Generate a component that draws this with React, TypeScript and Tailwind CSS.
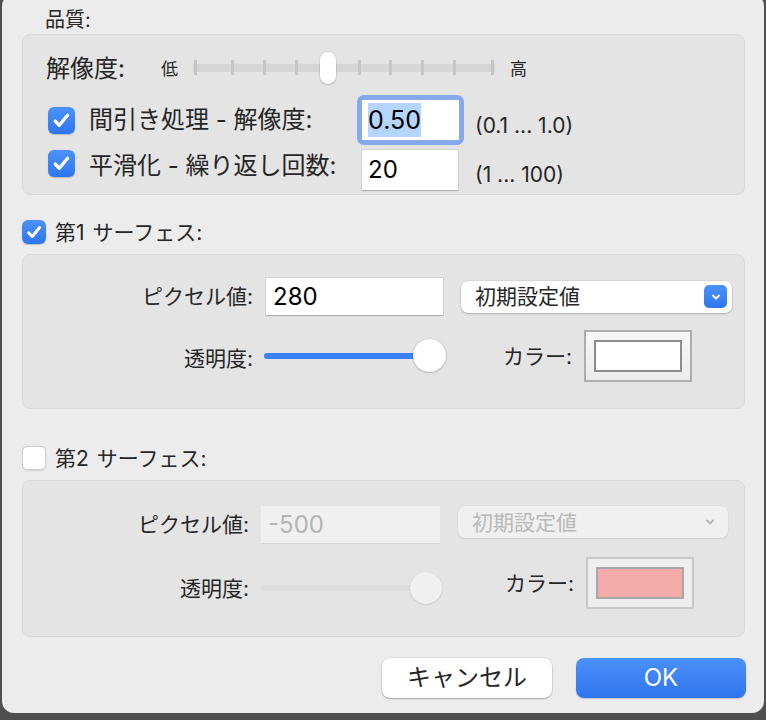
import React from "react"

function Checkbox({ checked, big }: { checked: boolean; big?: boolean }) {
  const size = big ? "w-[27px] h-[27px]" : "w-[24px] h-[24px]"
  if (!checked) {
    return (
      <div
        className={`${size} shrink-0 rounded-[5px] border border-[#cfcfcf] bg-white shadow-[0_0.5px_1px_rgba(0,0,0,0.12)]`}
      />
    )
  }
  return (
    <div
      className={`${size} shrink-0 rounded-[6px] bg-gradient-to-b from-[#4b92fa] to-[#2f75ef] flex items-center justify-center shadow-[0_0.5px_1px_rgba(0,0,0,0.2)]`}
    >
      <svg viewBox="0 0 24 24" className="w-[84%] h-[84%]">
        <path
          d="M5.5 12.8l4.3 4.4L18.6 6.6"
          fill="none"
          stroke="white"
          strokeWidth="3.6"
          strokeLinecap="round"
          strokeLinejoin="round"
        />
      </svg>
    </div>
  )
}

// tick centres, relative to track start
const ticks = [2, 39.7, 71.3, 103, 134.5, 166, 197.7, 229.3, 261, 299.7]

function QualitySlider() {
  return (
    <div className="relative w-[302px] h-[34px]">
      <div className="absolute left-0 right-0 top-[12px] h-[8px] bg-[#d6d6d6]" />
      {ticks.map((t, i) => (
        <div
          key={i}
          className="absolute top-[8px] w-[3px] h-[15px] bg-[#c5c5c5]"
          style={{ left: t - 1.5 }}
        />
      ))}
      <div className="absolute left-[127px] top-0 w-[16px] h-[32px] rounded-full bg-white shadow-[0_0.5px_2px_rgba(0,0,0,0.35)]" />
    </div>
  )
}

function ColorWell({ disabled }: { disabled?: boolean }) {
  return (
    <div
      className={
        disabled
          ? "w-[108px] h-[52px] shrink-0 border-2 border-[#c9c9c9] bg-[#eeeeee] p-[8px]"
          : "w-[108px] h-[52px] shrink-0 border-2 border-[#adadad] bg-gradient-to-b from-[#f7f7f7] to-[#ebebeb] p-[8px]"
      }
    >
      <div
        className={
          disabled
            ? "w-full h-full border-2 border-[#a8a8a8] bg-[#f4acab]"
            : "w-full h-full border-2 border-[#8c8c8c] bg-white"
        }
      />
    </div>
  )
}

export default function App() {
  return (
    <div className="w-[766px] h-[720px] overflow-hidden bg-[#4f4f4f] text-[#262626] font-['Inter','Noto_Sans_CJK_JP',sans-serif]">
      <div className="ml-[2px] -mt-[6px] flex h-[719px] w-[762px] flex-col rounded-[12px] bg-[#ececec] pt-[12px]">
        {/* 品質 */}
        <div className="ml-[43px] h-[28px] text-[20px] leading-[28px]">品質:</div>
        <div className="ml-[20px] mr-[19px] h-[161px] shrink-0 rounded-[8px] border border-[#d9d9d9] bg-[#e4e4e4]">
          <div className="mt-[17px] flex h-[34px] items-center">
            <div className="ml-[23px] w-[115px] text-[24px] leading-none">解像度:</div>
            <div className="w-[32px] text-[17px] leading-none">低</div>
            <QualitySlider />
            <div className="ml-[15px] text-[17px] leading-none">高</div>
          </div>

          <div className="mt-[9px] flex h-[50px] items-center">
            <div className="ml-[25px]">
              <Checkbox checked big />
            </div>
            <div className="ml-[14px] w-[268px] text-[24px] leading-none whitespace-nowrap">間引き処理 - 解像度:</div>
            <div className="w-[107px] h-[50px] rounded-[7px] bg-[#86a9ec] p-[5px]">
              <div className="h-full w-full bg-white pl-[6px] pt-[3px]">
                <span className="inline-block h-[34px] bg-[#b4d5fe] text-[25px] leading-[34px] text-black">0.50</span>
              </div>
            </div>
            <div className="ml-[11px] mt-[10px] text-[21px] leading-none">(0.1 ... 1.0)</div>
          </div>

          <div className="mt-[5px] flex h-[40px] items-start">
            <div className="ml-[25px]">
              <Checkbox checked big />
            </div>
            <div className="ml-[14px] w-[273px] text-[24px] leading-[32px] whitespace-nowrap">平滑化 - 繰り返し回数:</div>
            <div className="w-[96px] h-[40px] bg-white pl-[6px] text-[24px] leading-[40px] text-black shadow-[0_0_0_1px_rgba(0,0,0,0.06),0_1px_1px_rgba(0,0,0,0.18)]">
              20
            </div>
            <div className="ml-[17px] mt-[5px] text-[21px] leading-[40px]">(1 ... 100)</div>
          </div>
        </div>

        {/* 第1 サーフェス */}
        <div className="ml-[20px] mt-[25px] flex h-[24px] items-center">
          <Checkbox checked />
          <div className="ml-[9px] text-[21px] leading-none">
            第1<span className="ml-[8px]">サーフェス:</span>
          </div>
        </div>
        <div className="ml-[20px] mr-[19px] mt-[10px] h-[155px] shrink-0 rounded-[8px] border border-[#d9d9d9] bg-[#e4e4e4]">
          <div className="mt-[23px] flex h-[37px] items-center">
            <div className="w-[230px] text-right text-[21px] leading-none">ピクセル値:</div>
            <div className="ml-[13px] w-[177px] h-[37px] bg-white pl-[7px] text-[24px] leading-[37px] text-black shadow-[0_0_0_1px_rgba(0,0,0,0.06),0_1px_1px_rgba(0,0,0,0.18)]">
              280
            </div>
            <div className="ml-[18px] flex w-[271px] h-[32px] items-center justify-between rounded-[7px] bg-white pl-[14px] pr-[5px] shadow-[0_0_0_0.5px_rgba(0,0,0,0.1),0_1px_2px_rgba(0,0,0,0.2)]">
              <span className="text-[21px] leading-none">初期設定値</span>
              <div className="flex w-[23px] h-[23px] items-center justify-center rounded-[5px] bg-gradient-to-b from-[#4b92fa] to-[#2f75ef]">
                <svg viewBox="0 0 12 12" className="w-[12px] h-[12px]">
                  <path d="M3 4.6l3 3 3-3" fill="none" stroke="white" strokeWidth="2" strokeLinecap="round" strokeLinejoin="round" />
                </svg>
              </div>
            </div>
          </div>

          <div className="mt-[15px] flex h-[52px] items-center">
            <div className="w-[230px] mt-[4px] text-right text-[21px] leading-none">透明度:</div>
            <div className="relative ml-[11px] w-[182px] h-[34px]">
              <div className="absolute left-0 right-[16px] top-[14px] h-[6px] rounded-full bg-[#3a81f5]" />
              <div className="absolute right-0 top-0 w-[33px] h-[33px] rounded-full bg-white shadow-[0_0.5px_2px_rgba(0,0,0,0.35)]" />
            </div>
            <div className="ml-[57px] w-[81px] text-[21px] leading-none">カラー:</div>
            <ColorWell />
          </div>
        </div>

        {/* 第2 サーフェス */}
        <div className="ml-[20px] mt-[37px] flex h-[24px] items-center">
          <Checkbox checked={false} />
          <div className="ml-[9px] text-[21px] leading-none">
            第2<span className="ml-[8px]">サーフェス:</span>
          </div>
        </div>
        <div className="ml-[20px] mr-[19px] mt-[10px] h-[157px] shrink-0 rounded-[8px] border border-[#d9d9d9] bg-[#e4e4e4]">
          <div className="mt-[25px] flex h-[37px] items-start">
            <div className="w-[226px] text-right text-[21px] leading-[37px]">ピクセル値:</div>
            <div className="ml-[12px] w-[179px] h-[37px] bg-[#f0f0f0] pl-[7px] text-[24px] leading-[37px] text-[#b4b4b4] shadow-[0_1px_0_rgba(0,0,0,0.06)]">
              -500
            </div>
            <div className="ml-[18px] flex w-[270px] h-[32px] items-center justify-between rounded-[7px] bg-[#f0f0f0] pl-[14px] pr-[12px] shadow-[0_0_0_0.5px_rgba(0,0,0,0.05),0_1px_1px_rgba(0,0,0,0.08)]">
              <span className="text-[21px] leading-none text-[#b9b9b9]">初期設定値</span>
              <svg viewBox="0 0 12 12" className="w-[12px] h-[12px]">
                <path d="M3 4.5l3 3 3-3" fill="none" stroke="#b5b5b5" strokeWidth="2" strokeLinecap="round" strokeLinejoin="round" />
              </svg>
            </div>
          </div>

          <div className="mt-[14px] flex h-[52px] items-center">
            <div className="w-[226px] mt-[10px] text-right text-[21px] leading-none">透明度:</div>
            <div className="relative ml-[12px] mt-[10px] w-[181px] h-[32px]">
              <div className="absolute left-0 right-[16px] top-[13px] h-[6px] rounded-full bg-[#dcdcdc]" />
              <div className="absolute right-0 top-0 w-[32px] h-[32px] rounded-full bg-[#f0f0f0] shadow-[0_0.5px_1.5px_rgba(0,0,0,0.2)]" />
            </div>
            <div className="ml-[63px] w-[81px] text-[21px] leading-none">カラー:</div>
            <ColorWell disabled />
          </div>
        </div>

        {/* buttons */}
        <div className="mt-[21px] flex justify-end gap-[24px] pr-[18px]">
          <button className="w-[170px] h-[40px] rounded-[8px] bg-white text-[24px] leading-none text-[#262626] shadow-[0_0_0_0.5px_rgba(0,0,0,0.12),0_1px_1.5px_rgba(0,0,0,0.25)]">
            キャンセル
          </button>
          <button className="w-[170px] h-[40px] rounded-[8px] bg-gradient-to-b from-[#4b90f8] to-[#2f75ef] text-[24px] leading-none text-white shadow-[0_1px_1.5px_rgba(0,0,0,0.2)]">
            OK
          </button>
        </div>
      </div>
    </div>
  )
}
